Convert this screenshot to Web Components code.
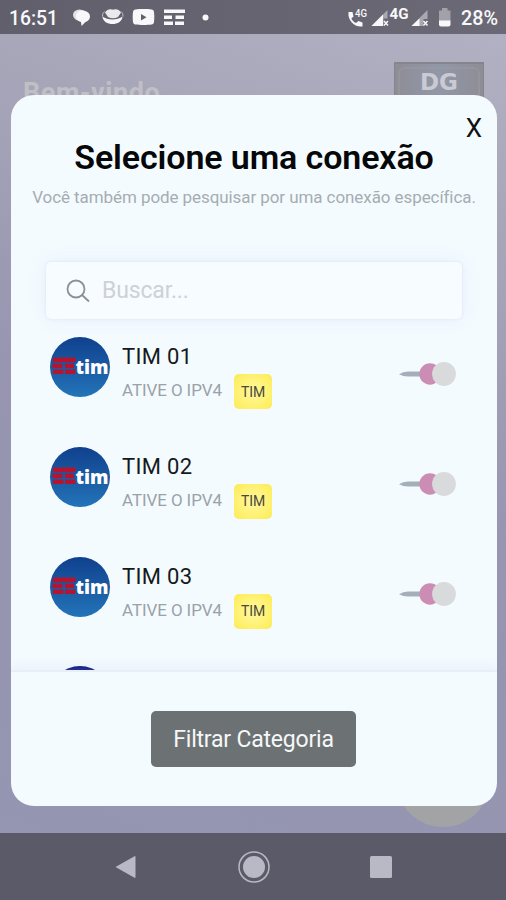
<!DOCTYPE html>
<html lang="pt-BR">
<head>
<meta charset="UTF-8">
<meta name="viewport" content="width=device-width, initial-scale=1">
<title>Selecione uma conexão</title>
<style>
    body {
        margin: 0;
        font-family: Roboto, "Liberation Sans", sans-serif;
        overflow: hidden;
    }
</style>
</head>
<body>
<phone-screen>
    <status-bar slot="status"></status-bar>
    <welcome-page slot="page">Bem-vindo</welcome-page>
    <connection-modal slot="modal">
        <span slot="title">Selecione uma conexão</span>
        <span slot="subtitle">Você também pode pesquisar por uma conexão específica.</span>
        <search-bar slot="search">Buscar...</search-bar>
        <connection-item><span slot="name">TIM 01</span><span slot="info">ATIVE O IPV4</span><span slot="tag">TIM</span></connection-item>
        <connection-item><span slot="name">TIM 02</span><span slot="info">ATIVE O IPV4</span><span slot="tag">TIM</span></connection-item>
        <connection-item><span slot="name">TIM 03</span><span slot="info">ATIVE O IPV4</span><span slot="tag">TIM</span></connection-item>
        <tim-logo dark></tim-logo>
        <filter-button slot="footer">Filtrar Categoria</filter-button>
    </connection-modal>
    <nav-bar slot="nav"></nav-bar>
</phone-screen>

<script>
class BaseElement extends HTMLElement {
    constructor() {
        super();
        this.shadowDOM = this.attachShadow({mode: "open"});
    }

    connectedCallback() {
        this.render();
    }
}

class PhoneScreen extends BaseElement {
    render() {
        this.shadowDOM.innerHTML = `
        <style>
            :host {
                display: grid;
                grid-template-rows: 34px 1fr 67px;
                position: relative;
                width: 506px;
                height: 900px;
                overflow: hidden;
                background: linear-gradient(200deg, #b4b3c5 0%, #a7a6b9 22%, #9795b0 50%, #9496b2 100%);
            }
            .overlay {
                position: absolute;
                inset: 95px 9px 94px 11px;
                display: grid;
            }
        </style>
        <slot name="status"></slot>
        <slot name="page"></slot>
        <slot name="nav"></slot>
        <div class="overlay"><slot name="modal"></slot></div>`;
    }
}

class StatusBar extends BaseElement {
    render() {
        this.shadowDOM.innerHTML = `
        <style>
            :host {
                display: block;
                background: linear-gradient(90deg, #625f6d, #6b6975);
            }
            svg {
                display: block;
            }
            text {
                fill: #f8f8fa;
                font-family: Roboto, sans-serif;
            }
        </style>
        <svg width="506" height="34" viewBox="0 0 506 34" fill="#f8f8fa">
            <text x="9" y="25" font-size="19.500" font-weight="500" textLength="49" lengthAdjust="spacingAndGlyphs">16:51</text>
            <!-- chat -->
            <ellipse cx="79.500" cy="15" rx="6.500" ry="5.500" opacity=".85"/>
            <path d="M82 10.500c4.500 0 8 2.400 8 6 0 2.800-2 4.800-4.500 5.400L81.500 26l-.5-4c-3-.8-5-2.700-5-5.500 0-3.600 2.500-6 6-6z"/>
            <!-- bowl -->
            <path d="M105 12.500c2-3 4.500-3.500 6.500-3 1 .2 2 .2 3 0 2-.5 4.500 0 6.500 3l-3 4.500c-3 1.700-7 1.700-10 0z" opacity=".9"/>
            <path d="M102.500 16.500c5 4 15 4 20 0-.5 10-19.500 10-20 0z"/>
            <path d="M104.500 11.500q-2.500 2-2 5m18.500-5q2.500 2 2 5" fill="none" stroke="#f8f8fa" opacity=".6"/>
            <!-- video -->
            <path d="M135.500 9.500c4-.6 12-.6 16 0 1.500.3 2.300 1.200 2.500 2.500.4 3 .4 7 0 10-.2 1.500-1 2.400-2.500 2.600-4 .6-12 .6-16 0-1.500-.2-2.300-1.100-2.500-2.600-.4-3-.4-7 0-10 .2-1.300 1-2.200 2.500-2.500z"/>
            <path d="M141 14v6.500l5.500-3.200z" fill="#625f6d"/>
            <!-- operator -->
            <path d="M164 9.500h21v3.500h-21zM164 15.500h8v3.500h-8zM175.500 15.500h8.500v3.500h-8.500zM164 21.500h9v3.500h-9zM175 21.500h9v3.500h-9z"/>
            <circle cx="205.500" cy="17.500" r="3"/>
            <!-- phone -->
            <path d="M348.500 12h4l1 4.500-2.200 2c1.200 2.300 2.500 3.500 4.700 4.500l2.500-2 4 1.500v4c-8 1-15-6-14-14.500z"/>
            <text x="355" y="17" font-size="10.500" font-weight="500" textLength="12" lengthAdjust="spacingAndGlyphs">4G</text>
            <path d="M387.500 10v8.500h-4V26h-12z" opacity=".45"/>
            <path d="M371.500 26L383 14.500V26z"/>
            <path d="M384 21l4 4.500m0-4.500l-4 4.500" stroke="#f8f8fa" stroke-width="1.500"/>
            <text x="389.500" y="19" font-size="14.500" font-weight="700" textLength="19" lengthAdjust="spacingAndGlyphs">4G</text>
            <path d="M427.500 10v9h-4v7h-12z" opacity=".45"/>
            <path d="M411.500 26l8-7.500V26z"/>
            <path d="M423.500 21l4 4.500m0-4.500l-4 4.500" stroke="#f8f8fa" stroke-width="1.500"/>
            <path d="M442 8h5.500v2.500h3V21h-11.500V10.500h3z" opacity=".4"/>
            <path d="M439 20.500h11.500v4q0 2-2 2h-7.500q-2 0-2-2z"/>
            <text x="461" y="25" font-size="19.500" font-weight="500" textLength="37" lengthAdjust="spacingAndGlyphs">28%</text>
        </svg>`;
    }
}

class WelcomePage extends BaseElement {
    render() {
        this.shadowDOM.innerHTML = `
        <style>
            :host {
                display: flex;
                flex-direction: column;
                justify-content: space-between;
                overflow: hidden;
            }
            header {
                display: flex;
                justify-content: space-between;
                padding: 28px 22px 0 23px;
            }
            h2 {
                margin: 15px 0 0;
                font-size: 27px;
                line-height: 32px;
                font-weight: 700;
                letter-spacing: .55px;
                color: #c0bfc5;
            }
            .logo {
                box-sizing: border-box;
                width: 90px;
                height: 60px;
                border: 1px solid #85858c;
                border-top-width: 2px;
                background: linear-gradient(90deg, #8d8d95, #9297a8 50%, #8d8d95);
            }
            .fab {
                align-self: flex-end;
                width: 94px;
                height: 94px;
                margin: 0 16px 6px 0;
                border-radius: 50%;
                background: #a2a3a4;
            }
        </style>
        <header>
            <h2><slot></slot></h2>
            <svg class="logo" viewBox="0 0 88 57">
                <path d="M4 56V10q0-6 6-6h68q6 0 6 6v46" fill="none" stroke="#9b9ba3"/>
                <text x="25" y="25.500" font-family="DejaVu Sans" font-size="23" font-weight="700" fill="#cacbd2" textLength="38" lengthAdjust="spacingAndGlyphs">DG</text>
            </svg>
        </header>
        <div class="fab"></div>`;
    }
}

class ConnectionModal extends BaseElement {
    render() {
        this.shadowDOM.innerHTML = `
        <style>
            :host {
                display: flex;
                flex-direction: column;
                position: relative;
                min-height: 0;
                overflow: hidden;
                border-radius: 23px;
                background: #f4fbff;
            }
            .close {
                position: absolute;
                top: 15px;
                right: 15px;
                padding: 0;
                border: 0;
                background: none;
                font: 26px/36px Roboto, sans-serif;
                color: #101214;
            }
            h1 {
                margin: 42px 0 0;
                text-align: center;
                font-size: 34px;
                line-height: 40px;
                font-weight: 600;
                letter-spacing: -.12px;
                white-space: nowrap;
                color: #050708;
            }
            p {
                margin: 10px 0 0;
                text-align: center;
                font-size: 17px;
                line-height: 20px;
                letter-spacing: -.08px;
                white-space: nowrap;
                color: #a5adb2;
            }
            .search {
                padding: 55px 35px 0;
            }
            .list {
                height: 350px;
                overflow: hidden;
            }
            .list ::slotted(tim-logo) {
                margin: 17px 0 0 39px;
            }
            footer {
                flex: 1;
                display: flex;
                justify-content: center;
                align-items: flex-start;
                padding: 39px 1px 0 0;
                border-top: 2px solid #e9eff4;
                box-shadow: 0 -4px 10px rgba(190, 200, 235, .2);
            }
        </style>
        <button class="close">X</button>
        <h1><slot name="title"></slot></h1>
        <p><slot name="subtitle"></slot></p>
        <div class="search"><slot name="search"></slot></div>
        <div class="list"><slot></slot></div>
        <footer><slot name="footer"></slot></footer>`;
    }
}

class SearchBar extends BaseElement {
    render() {
        this.shadowDOM.innerHTML = `
        <style>
            :host {
                display: flex;
                align-items: center;
                gap: 12px;
                box-sizing: border-box;
                height: 57px;
                margin-bottom: 1px;
                padding-left: 20px;
                border-radius: 5px;
                background: #f6fcff;
                box-shadow: 0 0 3px rgba(160, 170, 215, .22), 0 0 16px rgba(190, 200, 240, .25);
                font-size: 23px;
                letter-spacing: -.15px;
                color: #ccd2d7;
            }
        </style>
        <svg width="24" height="24" viewBox="0 0 24 24" fill="none" stroke="#899197" stroke-width="1.800">
            <circle cx="10" cy="10" r="8.500"/>
            <path d="M16 16l7 6.500"/>
        </svg>
        <slot></slot>`;
    }
}

class TimLogo extends BaseElement {
    render() {
        const dark = this.hasAttribute("dark");
        const brand = `
            <path d="M3 20.500h22.500v4.500H3zM2.500 26.500h10v4.500h-10zM15 26.500h9v4.500h-9zM3 32.500h10.500V37H3zM15 32.500h10.500V37H15z" fill="#b51430"/>
            <text x="25.500" y="36.500" font-family="Open Sans" font-size="20" font-weight="800" fill="#fff" textLength="33" lengthAdjust="spacingAndGlyphs">tim</text>`;
        this.shadowDOM.innerHTML = `
        <style>
            :host {
                display: block;
                width: 60px;
                height: 60px;
            }
            svg {
                display: block;
                overflow: visible;
            }
        </style>
        <svg width="60" height="60" viewBox="0 0 60 60">
            <defs>
                <linearGradient id="blue" x2="0" y2="1">
                    <stop stop-color="${dark ? "#07107c" : "#10408e"}"/>
                    <stop offset="1" stop-color="#2374b8"/>
                </linearGradient>
            </defs>
            <circle cx="30" cy="30" r="30" fill="url(#blue)"/>
            ${dark ? "" : brand}
        </svg>`;
    }
}

class ToggleSwitch extends BaseElement {
    render() {
        this.shadowDOM.innerHTML = `
        <style>
            :host {
                display: block;
            }
            svg {
                display: block;
            }
        </style>
        <svg width="58" height="26" viewBox="0 0 58 26">
            <path d="M0 13.200q4-2.700 9-2.700h14v5H9q-5 0-9-2.300z" fill="#a5afb9"/>
            <circle cx="31" cy="13" r="10.700" fill="#cc8db4"/>
            <circle cx="45" cy="13" r="11.900" fill="#d9dadb"/>
        </svg>`;
    }
}

class ConnectionItem extends BaseElement {
    render() {
        this.shadowDOM.innerHTML = `
        <style>
            :host {
                display: flex;
                box-sizing: border-box;
                height: 109.800px;
                padding: 17px 40px 0 39px;
            }
            .text {
                flex: 1;
                padding: 6px 0 0 12px;
            }
            .name {
                font-size: 22px;
                line-height: 28px;
                letter-spacing: .3px;
                color: #15191b;
            }
            .info {
                display: flex;
                align-items: center;
                height: 35px;
                margin-top: 3px;
                font-size: 17px;
                letter-spacing: -.1px;
                color: #9aa2a8;
            }
            .info > span {
                width: 112px;
                padding-bottom: 3px;
                white-space: nowrap;
            }
            .tag {
                display: grid;
                place-items: center;
                width: 38px;
                height: 35px;
                border-radius: 5px;
                background: radial-gradient(#fff9a0, #ffef66 75%, #f8e950);
                font-size: 14px;
                color: #4a4a35;
            }
            toggle-switch {
                margin: 24px 0 0;
            }
        </style>
        <tim-logo></tim-logo>
        <div class="text">
            <div class="name"><slot name="name"></slot></div>
            <div class="info">
                <span><slot name="info"></slot></span>
                <div class="tag"><slot name="tag"></slot></div>
            </div>
        </div>
        <toggle-switch></toggle-switch>`;
    }
}

class FilterButton extends BaseElement {
    render() {
        this.shadowDOM.innerHTML = `
        <style>
            :host {
                display: block;
            }
            button {
                width: 205px;
                height: 56px;
                padding: 0;
                border: 0;
                border-radius: 5px;
                background: #6c7273;
                font: 23px Roboto, sans-serif;
                letter-spacing: -.2px;
                white-space: nowrap;
                color: #f5f7f8;
            }
        </style>
        <button><slot></slot></button>`;
    }
}

class NavBar extends BaseElement {
    render() {
        this.shadowDOM.innerHTML = `
        <style>
            :host {
                display: flex;
                justify-content: center;
                align-items: center;
                gap: 99px;
                background: #5b5a69;
            }
        </style>
        <svg width="24" height="26" viewBox="0 0 24 26"><path d="M1.500 13L20.500 2.200q1-.4 1 .8v20q0 1.200-1 .8z" fill="#b9b8c5"/></svg>
        <svg width="34" height="34" viewBox="0 0 34 34">
            <circle cx="17" cy="17" r="15" fill="none" stroke="#b9b8c5" stroke-width="1.500"/>
            <circle cx="17" cy="17" r="11" fill="#b9b8c5"/>
        </svg>
        <svg width="22" height="22" viewBox="0 0 22 22"><rect width="22" height="22" rx="1.500" fill="#b9b8c5"/></svg>`;
    }
}

customElements.define("phone-screen", PhoneScreen);
customElements.define("status-bar", StatusBar);
customElements.define("welcome-page", WelcomePage);
customElements.define("connection-modal", ConnectionModal);
customElements.define("search-bar", SearchBar);
customElements.define("tim-logo", TimLogo);
customElements.define("toggle-switch", ToggleSwitch);
customElements.define("connection-item", ConnectionItem);
customElements.define("filter-button", FilterButton);
customElements.define("nav-bar", NavBar);
</script>
</body>
</html>
